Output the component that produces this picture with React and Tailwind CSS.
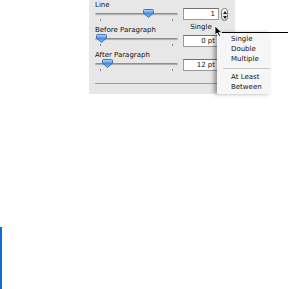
import React from 'react';

const font = { fontFamily: '"DejaVu Sans", "Liberation Sans", sans-serif' };

const Thumb = () => (
  <svg width="11" height="9" viewBox="0 0 11 9" className="absolute top-[-1px]">
    <defs>
      <linearGradient id="tg" x1="0" y1="0" x2="0" y2="1">
        <stop offset="0" stopColor="#b9dcff" />
        <stop offset="0.5" stopColor="#3f8fe8" />
        <stop offset="1" stopColor="#8cc4ff" />
      </linearGradient>
    </defs>
    <path d="M1.5 0.5 H9.5 A1 1 0 0 1 10.5 1.5 V4 L5.5 8.5 L0.5 4 V1.5 A1 1 0 0 1 1.5 0.5 Z" fill="url(#tg)" stroke="#2a5d9e" strokeWidth="0.8" />
  </svg>
);

const Slider = ({ label, pos }) => (
  <div className="flex flex-col">
    <div className="h-[10px] text-[7px] leading-[10px] text-[#111]">{label}</div>
    <div className="relative h-[8px]">
      <div className="absolute left-0 right-0 top-[3px] h-[3px] rounded-full bg-gradient-to-b from-[#7d7d7d] to-[#c4c4c4] border-b border-[#e0e0e0]" />
      <div className="absolute top-0" style={{ left: pos }}>
        <Thumb />
      </div>
    </div>
    <div className="flex justify-between h-[4px] px-[5px]">
      <div className="w-px h-[2px] mt-[1px] bg-[#888]" />
      <div className="w-px h-[2px] mt-[1px] bg-[#888]" />
    </div>
  </div>
);

const Field = ({ value }) => (
  <div className="w-[36px] h-[12px] bg-white border border-[#9a9a9a] border-t-[#6f6f6f] text-right pr-[3px] text-[7px] leading-[10px] text-[#111]">
    {value}
  </div>
);

const Stepper = () => (
  <div className="w-[7px] h-[13px] rounded-full border border-[#7a7a7a] bg-gradient-to-b from-white to-[#d8d8d8] flex flex-col items-center justify-center gap-[2px]">
    <svg width="4" height="3" viewBox="0 0 4 3"><path d="M0 3 L2 0 L4 3 Z" fill="#222" /></svg>
    <svg width="4" height="3" viewBox="0 0 4 3"><path d="M0 0 L4 0 L2 3 Z" fill="#222" /></svg>
  </div>
);

export default function App() {
  const items = ['Single', 'Double', 'Multiple'];
  const items2 = ['At Least', 'Between'];
  return (
    <div className="relative w-[288px] h-[289px] bg-white overflow-hidden" style={font}>
      <div className="ml-[89px] w-[146px] h-[94px] bg-[#e7e7e7] flex flex-col">
        <div className="flex pl-[6px] gap-[5px]">
          <div className="w-[83px] flex flex-col gap-[3px]">
            <Slider label="Line" pos={48} />
            <Slider label="Before Paragraph" pos={1} />
            <Slider label="After Paragraph" pos={7} />
          </div>
          <div className="flex flex-col pt-[8px]">
            <div className="flex items-start gap-[2px]">
              <Field value="1" />
              <Stepper />
            </div>
            <div className="w-[36px] text-center text-[7px] leading-[10px] mt-[1px] text-[#111]">Single</div>
            <div className="mt-[3px]"><Field value="0 pt" /></div>
            <div className="mt-[12px]"><Field value="12 pt" /></div>
          </div>
        </div>
        <div className="ml-[6px] mt-[11px] h-px bg-[#9c9c9c]" />
      </div>
      <div className="ml-0 mt-[133px] w-[2px] h-[62px] bg-[#0b6fd2]" />

      <div className="absolute left-[217px] top-[33px] w-[54px] h-[61px] bg-[#f6f6f6] shadow-[-3px_0_4px_rgba(0,0,0,0.35)] pt-[1px] text-[7px] text-[#111]">
        {items.map((t) => (
          <div key={t} className="h-[10px] leading-[10px] pl-[14px]">{t}</div>
        ))}
        <div className="h-[8px] flex items-center pl-[6px] pr-[1px]">
          <div className="w-full h-px bg-[#c8c8c8]" />
        </div>
        {items2.map((t) => (
          <div key={t} className="h-[10px] leading-[10px] pl-[14px]">{t}</div>
        ))}
      </div>

      <div className="absolute left-[220px] top-[32px] w-[68px] h-px bg-black" />
      <svg width="9" height="12" viewBox="0 0 9 12" className="absolute left-[214px] top-[25px]">
        <path d="M1 1 L1 10 L3.2 8 L5 11.5 L6.5 10.8 L4.8 7.4 L7.8 7.4 Z" fill="#000" stroke="#fff" strokeWidth="0.8" />
      </svg>
    </div>
  );
}
